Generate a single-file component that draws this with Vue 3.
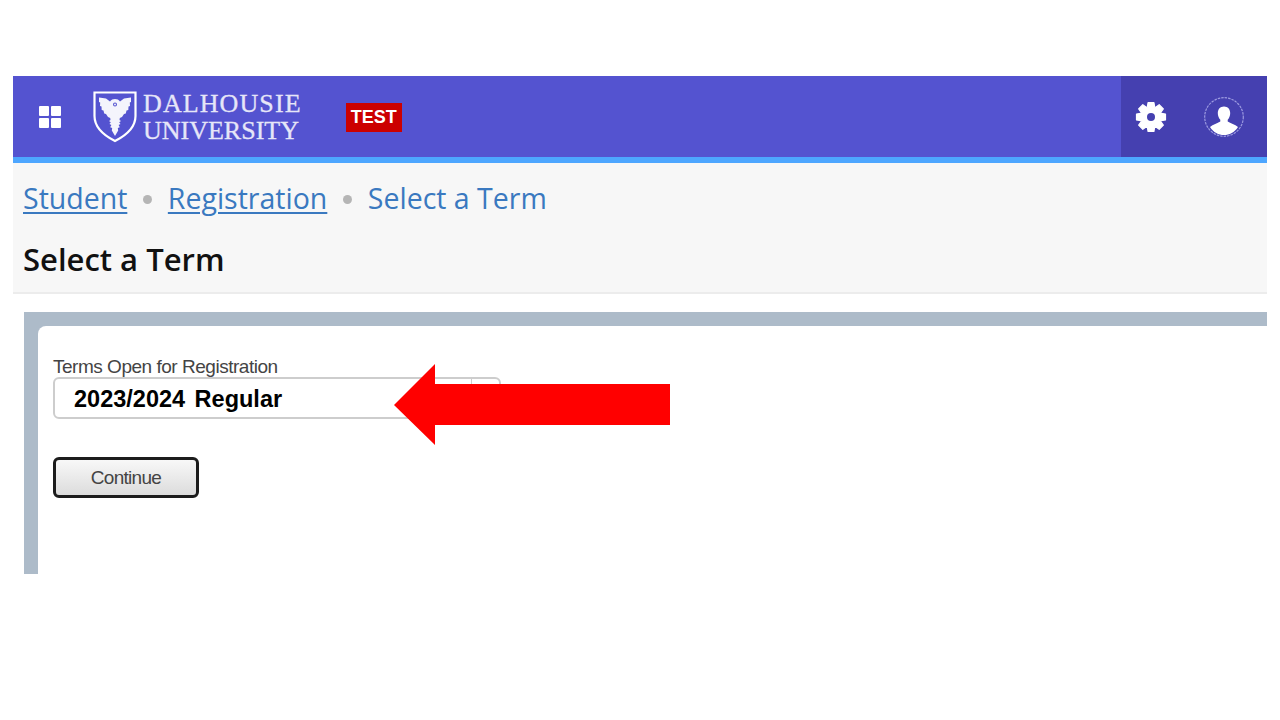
<script setup>
const crumbs = [
  { label: 'Student', link: true },
  { label: 'Registration', link: true },
  { label: 'Select a Term', link: false },
]

// 8 tooth gear outline, centre 16,16
const gearPath = () => {
  const pts = []
  for (let i = 0; i < 8; i++) {
    const a = (i * Math.PI) / 4 - Math.PI / 2
    const ring = [
      [a - 0.4, 9.8],
      [a - 0.2, 14.8],
      [a + 0.2, 14.8],
      [a + 0.4, 9.8],
    ]
    ring.forEach(([t, r]) => {
      pts.push((16 + r * Math.cos(t)).toFixed(2) + ' ' + (16 + r * Math.sin(t)).toFixed(2))
    })
  }
  return 'M' + pts.join('L') + 'Z'
}
const gear = gearPath()
</script>

<template>
  <div class="page">
    <header class="topbar">
      <div class="brand">
        <svg class="apps" width="22" height="22" viewBox="0 0 22 22">
          <rect x="0" y="0" width="10" height="10" rx="1" fill="#fff" />
          <rect x="12" y="0" width="10" height="10" rx="1" fill="#fff" />
          <rect x="0" y="12" width="10" height="10" rx="1" fill="#fff" />
          <rect x="12" y="12" width="10" height="10" rx="1" fill="#fff" />
        </svg>
        <svg class="shield" width="44" height="52" viewBox="0 0 44 52">
          <path d="M1.500 1.500H42.500V25C42.500 37 32 45 22 50C12 45 1.500 37 1.500 25Z" fill="none" stroke="#fff" stroke-width="2.200" />
          <path fill="#f4f4fc" d="M6 6.500L13 7.500L17 10.500C18 8.800 20 8 22 8C24 8 26 8.800 27 10.500L31 7.500L38 6.500L38 11L36.800 11.500L37 15L35.500 15.500L35.300 19L33.500 19.500L32.800 22.500L31 23L29 26L26.800 27L26.500 29L28 30L26.200 31.200L27.500 33L25.600 34L26.800 36.200L24.800 37L25.200 39.500L22 45L18.800 39.500L19.200 37L17.200 36.200L18.400 34L16.500 33L17.800 31.200L16 30L17.500 29L17.200 27L15 26L13 23L11.200 22.500L10.500 19.500L8.700 19L8.500 15.500L7 15L7.200 11.500L6 11Z" />
          <circle cx="22" cy="13.500" r="2" fill="#5453d0" />
          <circle cx="22" cy="13.500" r="0.900" fill="#fff" />
        </svg>
        <div class="wordmark">
          <span class="line-one">DALHOUSIE</span>
          <span>UNIVERSITY</span>
        </div>
        <span class="badge">TEST</span>
      </div>
      <div class="tools">
        <svg width="32" height="32" viewBox="0 0 32 32">
          <path :d="gear" fill="#fff" stroke="#fff" stroke-width="1.200" stroke-linejoin="round" />
          <circle cx="16" cy="16" r="4" fill="#4540b0" />
        </svg>
        <svg width="40" height="40" viewBox="0 0 40 40">
          <circle cx="20" cy="20" r="19.300" fill="none" stroke="#9c9ae0" stroke-width="1.200" stroke-dasharray="2.500 1" />
          <path fill="#fff" d="M20 9.500C23.800 9.500 26.200 12.300 26.200 16C26.200 18.800 25.200 21.200 23.700 22.700V24.500C26.500 26.500 31 27 34 30C30.500 35.500 25.500 38 20 38C14.500 38 9.500 35.500 6 30C9 27 13.500 26.500 16.300 24.500V22.700C14.800 21.200 13.800 18.800 13.800 16C13.800 12.300 16.200 9.500 20 9.500Z" />
        </svg>
      </div>
    </header>

    <div class="heading">
      <nav class="crumbs">
        <template v-for="(c, i) in crumbs" :key="c.label">
          <i v-if="i > 0" class="dot"></i>
          <a v-if="c.link" href="#">{{ c.label }}</a>
          <span v-else>{{ c.label }}</span>
        </template>
      </nav>
      <h1>Select a Term</h1>
    </div>

    <section class="panel">
      <div class="panel-body">
        <label class="field-label">Terms Open for Registration</label>
        <div class="select">
          <span class="select-value">2023/2024 Regular</span>
          <span class="select-arrow"></span>
        </div>
        <button class="continue">Continue</button>
      </div>
    </section>

    <svg class="arrow" width="276" height="81" viewBox="0 0 276 81">
      <path d="M0 41L41 0V20H276V61H41V81Z" fill="#ff0000" />
    </svg>
  </div>
</template>

<style>
html, body {
  margin: 0;
  background: #fff;
}
</style>

<style scoped>
.page {
  position: relative;
  width: 1280px;
  height: 720px;
  padding: 76px 13px 0;
  box-sizing: border-box;
  overflow: hidden;
  font-family: "Liberation Sans", Arial, sans-serif;
}
.topbar {
  display: flex;
  justify-content: space-between;
  height: 81px;
  background: #5453d0;
  border-bottom: 6px solid #4da6ff;
}
.brand {
  display: flex;
  align-items: center;
}
.apps {
  margin-left: 26px;
}
.shield {
  margin-left: 32px;
}
.wordmark {
  display: flex;
  flex-direction: column;
  margin-left: 6px;
  font-family: "Liberation Serif", serif;
  font-size: 26px;
  line-height: 27px;
  color: #e6e6f8;
  -webkit-text-stroke: 0.3px #e6e6f8;
}
.line-one {
  letter-spacing: 1.100px;
}
.badge {
  margin: 2px 0 0 44px;
  width: 56px;
  height: 29px;
  line-height: 29px;
  text-align: center;
  background: #cc0000;
  color: #fff;
  font-size: 18px;
  font-weight: 700;
}
.tools {
  width: 146px;
  display: flex;
  align-items: center;
  gap: 37px;
  padding-left: 14px;
  box-sizing: border-box;
  background: #4540b0;
}
.heading {
  height: 114px;
  background: #f7f7f7;
  border-bottom: 2px solid #ececec;
  padding: 15px 10px 0;
}
.crumbs {
  display: flex;
  align-items: center;
  height: 40px;
  font-family: "Open Sans", sans-serif;
  font-size: 28.500px;
  color: #3a79c0;
}
.crumbs a {
  color: #3a79c0;
  text-decoration: underline;
  text-decoration-thickness: 1.500px;
  text-underline-offset: 3px;
}
.dot {
  width: 9px;
  height: 9px;
  margin: 3px 15.500px 0 16px;
  border-radius: 50%;
  background: #b5b5b5;
}
h1 {
  margin: 20px 0 0;
  font-family: "Open Sans", sans-serif;
  font-size: 31px;
  line-height: 42px;
  font-weight: 600;
  color: #111;
}
.panel {
  margin: 18px 0 0 11px;
  height: 262px;
  padding: 14px 0 0 14px;
  box-sizing: border-box;
  background: #adbbc9;
}
.panel-body {
  height: 100%;
  padding: 30px 0 0 15px;
  box-sizing: border-box;
  background: #fff;
  border-radius: 8px 0 0 0;
}
.field-label {
  display: block;
  font-size: 19px;
  line-height: 21px;
  letter-spacing: -0.480px;
  color: #444;
}
.select {
  display: flex;
  width: 448px;
  height: 42px;
  box-sizing: border-box;
  border: 2px solid #cdcdcd;
  border-radius: 6px;
  align-items: center;
}
.select-value {
  flex: 1;
  padding: 2px 0 0 19px;
  font-size: 23.500px;
  font-weight: 700;
  color: #000;
  word-spacing: 3px;
}
.select-arrow {
  width: 27px;
  height: 100%;
  border-left: 1px solid #cdcdcd;
}
.continue {
  display: block;
  margin-top: 38px;
  width: 146px;
  height: 41px;
  border: 3px solid #1c1c1c;
  border-radius: 6px;
  background: linear-gradient(#f8f8f8, #dcdcdc);
  font-family: "Liberation Sans", Arial, sans-serif;
  font-size: 19px;
  letter-spacing: -0.700px;
  color: #444;
  padding: 0;
}
.arrow {
  position: absolute;
  left: 394px;
  top: 364px;
}
</style>
